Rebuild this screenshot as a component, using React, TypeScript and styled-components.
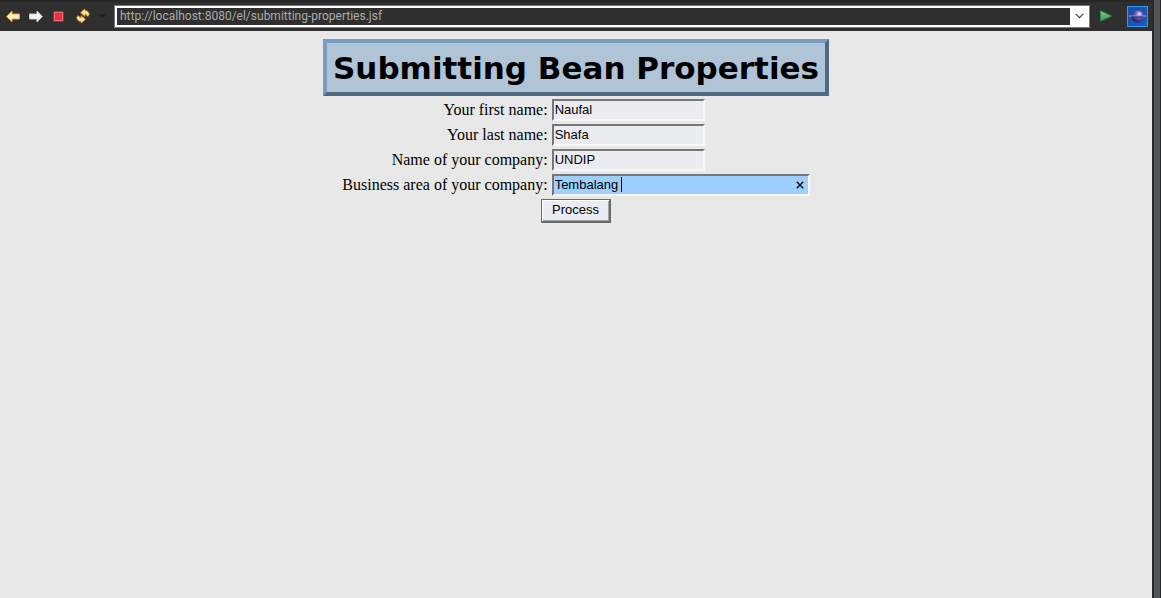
import React, { useState } from "react";
import styled, { createGlobalStyle } from "styled-components";

const GlobalStyle = createGlobalStyle`
  *, *::before, *::after { box-sizing: border-box; }
  body { margin: 0; background: #e8e8e8; }
`;

const Shell = styled.div`
  display: flex;
  min-height: 100vh;
`;

const View = styled.div`
  flex: 1;
  min-width: 0;
`;

const Sash = styled.div`
  flex: none;
  width: 9px;
  background: #515658;
  border-left: 2px solid #27282a;
  border-right: 1px solid #27282a;
`;

const Toolbar = styled.header`
  display: flex;
  align-items: center;
  height: 31px;
  padding: 0 0 1px 1px;
  background: #2f2f2f;
  border-top: 2px solid #272727;
`;

const ToolButton = styled.button<{ $width?: number }>`
  display: flex;
  align-items: center;
  justify-content: center;
  flex: none;
  width: ${(p) => p.$width ?? 23}px;
  height: 22px;
  padding: 0;
  border: 0;
  background: none;
`;

const AddressBar = styled.div`
  display: flex;
  align-items: center;
  flex: 1;
  height: 23px;
  margin-left: 5px;
  border: 1px solid #7a7a7a;
  padding-left: 2px;
  background: #ffffff;
`;

const AddressInput = styled.input`
  flex: 1;
  min-width: 0;
  height: 17px;
  padding: 0 3px;
  border: 0;
  outline: 0;
  background: #302e2e;
  color: #a9adad;
  font: 12px/16px Roboto, sans-serif;
`;

const Page = styled.main`
  display: flex;
  flex-direction: column;
  align-items: center;
  padding: 8px 8px 0;
  background: #e8e8e8;
`;

const Title = styled.h1`
  margin: 0;
  padding: 6px 6px 5px;
  border: 4px solid;
  border-color: #779ec0 #4f6984 #4f6984 #779ec0;
  background: #b0c4d8;
  color: #000000;
  font: bold 31px/38px "DejaVu Sans", sans-serif;
  white-space: nowrap;
`;

const Form = styled.form`
  display: flex;
  flex-direction: column;
  align-items: center;
  gap: 3px;
  padding-top: 3px;
`;

const Fields = styled.div`
  display: grid;
  grid-template-columns: auto auto;
  column-gap: 4px;
  row-gap: 3px;
`;

const Label = styled.label`
  text-align: right;
  color: #000000;
  font: 16px/22px "Liberation Serif", serif;
`;

const FieldBox = styled.div`
  position: relative;
  display: flex;
`;

const Field = styled.input<{ $wide?: boolean }>`
  width: ${(p) => (p.$wide ? 258 : 153)}px;
  height: 22px;
  padding: 0 1px 1px;
  border: 2px solid;
  border-color: #777777 #f8f8f8 #f8f8f8 #777777;
  border-radius: 0;
  outline: 0;
  background: ${(p) => (p.$wide ? "#9dd0ff" : "#ebebf2")};
  color: #000000;
  font: 13px/16px "Liberation Sans", sans-serif;
`;

const Caret = styled.span`
  position: absolute;
  left: 69px;
  top: 3px;
  width: 1px;
  height: 15px;
  background: #000000;
`;

const ClearButton = styled.button`
  position: absolute;
  right: 2px;
  top: 2px;
  display: flex;
  align-items: center;
  justify-content: center;
  width: 16px;
  height: 18px;
  padding: 0;
  border: 0;
  background: none;
`;

const Submit = styled.button`
  width: 70px;
  height: 24px;
  padding: 0 0 1px;
  border: 1px solid #6b6b6b;
  border-right-width: 2px;
  border-bottom-width: 2px;
  background: #ebebf2;
  box-shadow: inset 1px 1px #ffffff, inset -1px -1px #a5a5a5;
  color: #000000;
  font: 13px/16px "Liberation Sans", sans-serif;
`;

const arrow = "M0.7 6.5 L6 1 V4 H13.4 V9 H6 V12 Z";

const BackIcon = () => (
  <svg width="14" height="13" viewBox="0 0 14 13">
    <path d={arrow} fill="#fff3c4" stroke="#e2a136" strokeLinejoin="round" />
  </svg>
);

const ForwardIcon = () => (
  <svg width="14" height="13" viewBox="0 0 14 13">
    <path d={arrow} transform="translate(14 0) scale(-1 1)" fill="#f4f4f4" stroke="#d0d0d0" strokeLinejoin="round" />
  </svg>
);

const StopIcon = () => (
  <svg width="11" height="11" viewBox="0 0 11 11">
    <rect x="0.5" y="0.5" width="10" height="10" rx="1" fill="#e8323f" stroke="#a82a35" />
    <rect x="1.5" y="1.5" width="8" height="8" fill="none" stroke="#ee6670" />
  </svg>
);

const RefreshIcon = () => (
  <svg width="16" height="16" viewBox="0 0 16 16">
    <g fill="#fbe49a" stroke="#c9882a" strokeWidth="0.8" strokeLinejoin="round">
      <path d="M5.5 4.8 L9.5 1 L10.3 2.6 C12.6 2.8 14 4.2 14.3 6.6 L12.8 8.6 L11 6.6 L10 6.2 L10 8.4 Z" />
      <path d="M10.5 11.2 L6.5 15 L5.7 13.4 C3.4 13.2 2 11.8 1.7 9.4 L3.2 7.4 L5 9.4 L6 9.8 L6 7.6 Z" />
    </g>
  </svg>
);

const MenuIcon = () => (
  <svg width="7" height="4" viewBox="0 0 7 4">
    <path d="M0 0 H7 L3.5 4 Z" fill="#202020" />
  </svg>
);

const ChevronIcon = () => (
  <svg width="9" height="6" viewBox="0 0 9 6">
    <path d="M0.7 0.8 L4.5 4.6 L8.3 0.8" fill="none" stroke="#444444" strokeWidth="1.2" />
  </svg>
);

const GoIcon = () => (
  <svg width="12" height="12" viewBox="0 0 12 12">
    <defs>
      <linearGradient id="go" x1="0" y1="0" x2="0" y2="1">
        <stop offset="0" stopColor="#8fd28c" />
        <stop offset="1" stopColor="#2f9549" />
      </linearGradient>
    </defs>
    <path d="M0.5 0.8 L11.5 6 L0.5 11.2 Z" fill="url(#go)" stroke="#2e8b4a" strokeWidth="0.8" />
  </svg>
);

const BrowserIcon = () => (
  <svg width="21" height="21" viewBox="0 0 21 21">
    <defs>
      <linearGradient id="sky" x1="0" y1="0" x2="1" y2="1">
        <stop offset="0" stopColor="#1c4fa8" />
        <stop offset="1" stopColor="#1a5cbc" />
      </linearGradient>
      <radialGradient id="globe" cx="0.65" cy="0.3" r="0.7">
        <stop offset="0" stopColor="#f0e4f8" />
        <stop offset="0.4" stopColor="#8064b8" />
        <stop offset="1" stopColor="#241a5c" />
      </radialGradient>
    </defs>
    <rect x="0.5" y="0.5" width="20" height="20" fill="url(#sky)" stroke="#3399f2" />
    <circle cx="10.5" cy="10.5" r="6" fill="url(#globe)" />
    <path d="M2 10 H19" stroke="#9a9ee6" strokeWidth="1" />
    <path d="M5 11 H16" stroke="#2c216c" strokeWidth="1" />
  </svg>
);

const CloseIcon = () => (
  <svg width="8" height="8" viewBox="0 0 8 8">
    <path d="M0.8 0.8 L7.2 7.2 M7.2 0.8 L0.8 7.2" stroke="#111111" strokeWidth="1.5" />
  </svg>
);

const fields = [
  { id: "firstName", label: "Your first name:", value: "Naufal" },
  { id: "lastName", label: "Your last name:", value: "Shafa" },
  { id: "company", label: "Name of your company:", value: "UNDIP" },
  { id: "businessArea", label: "Business area of your company:", value: "Tembalang", wide: true },
];

export default function App() {
  const [values, setValues] = useState<Record<string, string>>(
    Object.fromEntries(fields.map((f) => [f.id, f.value]))
  );
  const update = (id: string, value: string) => setValues((v) => ({ ...v, [id]: value }));

  return (
    <Shell>
      <GlobalStyle />
      <View>
        <Toolbar>
          <ToolButton aria-label="Back"><BackIcon /></ToolButton>
          <ToolButton aria-label="Forward"><ForwardIcon /></ToolButton>
          <ToolButton aria-label="Stop"><StopIcon /></ToolButton>
          <ToolButton $width={25} aria-label="Refresh"><RefreshIcon /></ToolButton>
          <ToolButton $width={14} aria-label="Refresh options"><MenuIcon /></ToolButton>
          <AddressBar>
            <AddressInput aria-label="Address" defaultValue="http://localhost:8080/el/submitting-properties.jsf" />
            <ToolButton $width={19} aria-label="History"><ChevronIcon /></ToolButton>
          </AddressBar>
          <ToolButton $width={32} aria-label="Go"><GoIcon /></ToolButton>
          <ToolButton $width={30} aria-label="Open browser"><BrowserIcon /></ToolButton>
        </Toolbar>
        <Page>
          <Title>Submitting Bean Properties</Title>
          <Form onSubmit={(e) => e.preventDefault()}>
            <Fields>
              {fields.map((f) => (
                <React.Fragment key={f.id}>
                  <Label htmlFor={f.id}>{f.label}</Label>
                  <FieldBox>
                    <Field
                      id={f.id}
                      $wide={f.wide}
                      value={values[f.id]}
                      onChange={(e) => update(f.id, e.target.value)}
                    />
                    {f.wide && (
                      <>
                        <Caret />
                        <ClearButton type="button" aria-label="Clear" onClick={() => update(f.id, "")}>
                          <CloseIcon />
                        </ClearButton>
                      </>
                    )}
                  </FieldBox>
                </React.Fragment>
              ))}
            </Fields>
            <Submit type="submit">Process</Submit>
          </Form>
        </Page>
      </View>
      <Sash />
    </Shell>
  );
}
